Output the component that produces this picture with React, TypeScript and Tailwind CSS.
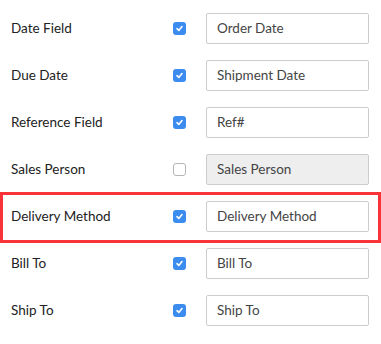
const rows = [
  { label: 'Date Field', value: 'Order Date', checked: true },
  { label: 'Due Date', value: 'Shipment Date', checked: true },
  { label: 'Reference Field', value: 'Ref#', checked: true },
  { label: 'Sales Person', value: 'Sales Person', checked: false },
  { label: 'Delivery Method', value: 'Delivery Method', checked: true, highlight: true },
  { label: 'Bill To', value: 'Bill To', checked: true },
  { label: 'Ship To', value: 'Ship To', checked: true },
]

function Check({ checked }: { checked: boolean }) {
  if (!checked) {
    return <span className="block h-[13px] w-[13px] rounded-[3px] border border-[#b5b5b5] bg-white" />
  }
  return (
    <span className="flex h-[13px] w-[13px] items-center justify-center rounded-[3px] bg-[#3c8cf0]">
      <svg width="9" height="9" viewBox="0 0 9 9" fill="none">
        <path d="M2 4.7 L3.8 6.4 L7 2.6" stroke="white" strokeWidth="1.6" strokeLinecap="round" strokeLinejoin="round" />
      </svg>
    </span>
  )
}

export default function App() {
  return (
    <div className="h-[344px] w-[381px] bg-white pt-[5px] font-['Lato','Open_Sans',sans-serif]">
      {rows.map((r) => (
        <div key={r.label} className="relative flex h-[47px] items-center pl-[11px]">
          <span className="w-[162px] text-[13.5px] text-[#222]">{r.label}</span>
          <Check checked={r.checked} />
          <div
            className={`ml-[20px] flex h-[31px] w-[163px] items-center rounded-[2px] border border-[#cccccc] pl-[10px] text-[13.5px] text-[#444] ${
              r.checked ? 'bg-white' : 'bg-[#eeeeee]'
            }`}
          >
            {r.value}
          </div>
          {r.highlight && (
            <span className="pointer-events-none absolute inset-x-0 top-[-1px] bottom-[-3px] border-[3px] border-[#fa3339]" />
          )}
        </div>
      ))}
    </div>
  )
}
